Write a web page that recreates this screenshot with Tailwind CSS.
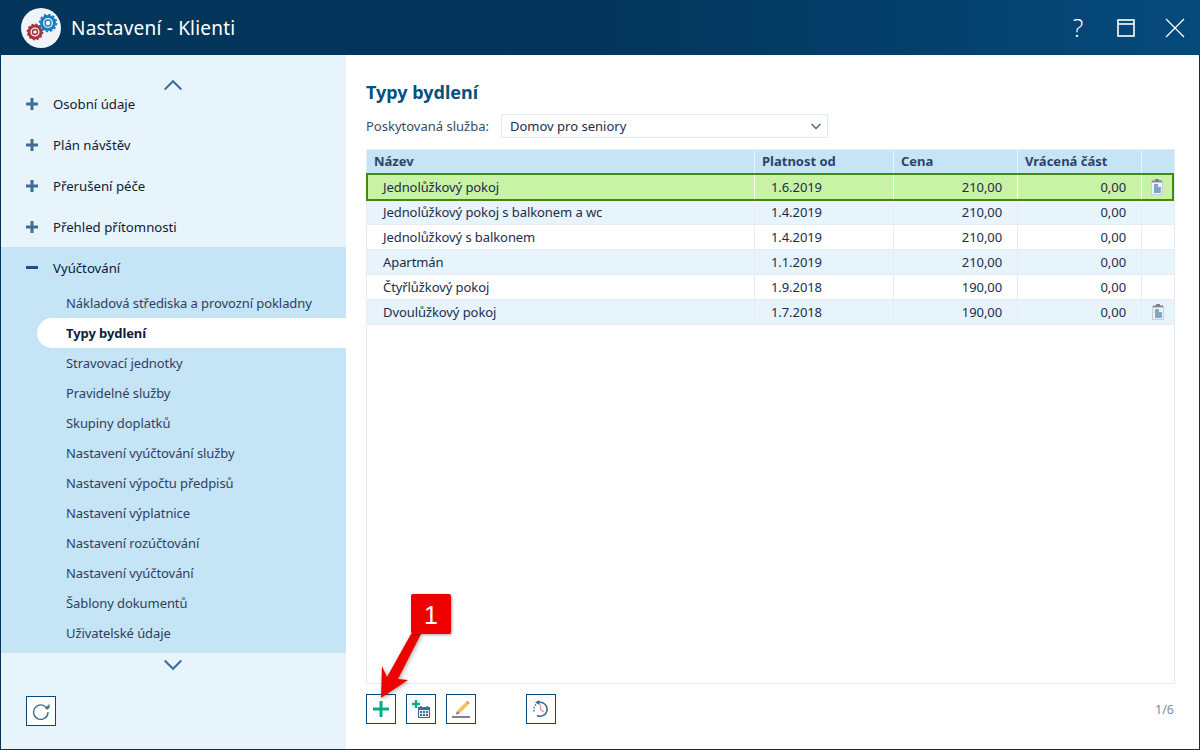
<!DOCTYPE html>
<html lang="en">
<head>
  <meta charset="UTF-8"/>
  <title>Nastavení - Klienti</title>
  <script src="https://cdn.jsdelivr.net/npm/@tailwindcss/browser@4"></script>
</head>
<body class="w-[1200px] h-[750px] overflow-hidden bg-white font-['Noto_Sans',sans-serif] text-[13px] text-[#1c2c4c]">
  <div class="relative flex flex-col h-[750px] border-x border-b border-[#03355a]">

    <!-- Title bar -->
    <header class="-mx-px h-[55px] shrink-0 flex items-center pl-[21px] pr-[15px] bg-gradient-to-r from-[#03355a] via-[#03355a] to-[#054a7c] text-white">
      <div class="w-10 h-10 rounded-full bg-[#eef4f8] flex items-center justify-center">
        <svg width="34" height="28" viewBox="0 0 34 28">
          <g fill="none" stroke="#a8323e">
            <circle cx="11" cy="18" r="6" stroke-width="3"/>
            <circle cx="11" cy="18" r="2.5" stroke-width="1.4"/>
            <circle cx="11" cy="18" r="7.6" stroke-width="1.6" stroke-dasharray="2 2"/>
          </g>
          <g fill="none" stroke="#1b7dc0">
            <circle cx="24" cy="9" r="6.5" stroke-width="3"/>
            <circle cx="24" cy="9" r="3" stroke-width="1.4"/>
            <circle cx="24" cy="9" r="8.4" stroke-width="1.8" stroke-dasharray="2.2 2.2"/>
          </g>
        </svg>
      </div>
      <h1 class="ml-[10px] pt-[1px] text-[19px] tracking-[0.2px]">Nastavení - Klienti</h1>
      <div class="ml-auto flex items-center">
        <span class="w-[16px] text-center text-[25px] leading-none font-light font-['Open_Sans',sans-serif]">?</span>
        <svg class="ml-[31px]" width="18" height="18" viewBox="0 0 18 18" fill="none" stroke="white" stroke-width="1.6"><rect x="1" y="1" width="16" height="16"/><path d="M1 5h16"/></svg>
        <svg class="ml-[30px]" width="20" height="20" viewBox="0 0 20 20" fill="none" stroke="white" stroke-width="1.3"><path d="M1 1l18 18M19 1L1 19"/></svg>
      </div>
    </header>

    <div class="flex flex-1 min-h-0">
      <!-- Sidebar -->
      <aside class="w-[345px] shrink-0 bg-[#e8f4fb] flex flex-col">
        <div class="h-[36px] shrink-0 flex items-end justify-center pr-[1px]">
          <svg width="18" height="12" viewBox="0 0 18 12" fill="none" stroke="#3f6c97" stroke-width="2"><path d="M0.700 10.500L9 2.200l8.300 8.300"/></svg>
        </div>
        <nav class="-mt-[8px] shrink-0 flex flex-col text-[13.2px] text-[#0c1a33]">
          <div class="h-[41px] flex items-center pl-[25px] pt-[2px]">
            <svg class="mr-[15px] -mt-[2px]" width="12" height="12" viewBox="0 0 12 12" fill="#3f6c97"><path d="M4.500 0h3v4.500H12v3H7.500V12h-3V7.500H0v-3h4.500z"/></svg>Osobní údaje
          </div>
          <div class="h-[41px] flex items-center pl-[25px] pt-[2px]">
            <svg class="mr-[15px] -mt-[2px]" width="12" height="12" viewBox="0 0 12 12" fill="#3f6c97"><path d="M4.500 0h3v4.500H12v3H7.500V12h-3V7.500H0v-3h4.500z"/></svg>Plán návštěv
          </div>
          <div class="h-[41px] flex items-center pl-[25px] pt-[2px]">
            <svg class="mr-[15px] -mt-[2px]" width="12" height="12" viewBox="0 0 12 12" fill="#3f6c97"><path d="M4.500 0h3v4.500H12v3H7.500V12h-3V7.500H0v-3h4.500z"/></svg>Přerušení péče
          </div>
          <div class="h-[41px] flex items-center pl-[25px] pt-[2px]">
            <svg class="mr-[15px] -mt-[2px]" width="12" height="12" viewBox="0 0 12 12" fill="#3f6c97"><path d="M4.500 0h3v4.500H12v3H7.500V12h-3V7.500H0v-3h4.500z"/></svg>Přehled přítomnosti
          </div>
          <div class="bg-[#c5e4f6] h-[406px] flex flex-col">
            <div class="h-[41px] shrink-0 flex items-center pl-[25px] pt-[2px]">
              <span class="w-3 h-[3px] mr-[15px] -mt-[2px] bg-[#1c4f86]"></span>Vyúčtování
            </div>
            <div class="flex flex-col text-[13px] tracking-[-0.08px] text-[#2e3f5c]">
              <a class="h-[30px] shrink-0 flex items-center pl-[65px] pt-[2px]">Nákladová střediska a provozní pokladny</a>
              <a class="h-[30px] shrink-0 flex items-center pl-[29px] pt-[2px] ml-[36px] -mr-px rounded-l-[15px] bg-white font-bold text-[#0f1c3c]">Typy bydlení</a>
              <a class="h-[30px] shrink-0 flex items-center pl-[65px] pt-[2px]">Stravovací jednotky</a>
              <a class="h-[30px] shrink-0 flex items-center pl-[65px] pt-[2px]">Pravidelné služby</a>
              <a class="h-[30px] shrink-0 flex items-center pl-[65px] pt-[2px]">Skupiny doplatků</a>
              <a class="h-[30px] shrink-0 flex items-center pl-[65px] pt-[2px]">Nastavení vyúčtování služby</a>
              <a class="h-[30px] shrink-0 flex items-center pl-[65px] pt-[2px]">Nastavení výpočtu předpisů</a>
              <a class="h-[30px] shrink-0 flex items-center pl-[65px] pt-[2px]">Nastavení výplatnice</a>
              <a class="h-[30px] shrink-0 flex items-center pl-[65px] pt-[2px]">Nastavení rozúčtování</a>
              <a class="h-[30px] shrink-0 flex items-center pl-[65px] pt-[2px]">Nastavení vyúčtování</a>
              <a class="h-[30px] shrink-0 flex items-center pl-[65px] pt-[2px]">Šablony dokumentů</a>
              <a class="h-[30px] shrink-0 flex items-center pl-[65px] pt-[2px]">Uživatelské údaje</a>
            </div>
          </div>
        </nav>
        <div class="flex-1 flex flex-col">
          <div class="h-[24px] flex items-center justify-center pr-[1px]">
            <svg width="18" height="12" viewBox="0 0 18 12" fill="none" stroke="#3f6c97" stroke-width="2"><path d="M0.700 1.500L9 9.800l8.300-8.300"/></svg>
          </div>
          <div class="pl-[25px] pt-[19px]">
            <button class="w-[30px] h-[30px] bg-white border border-[#054a7c] flex items-center justify-center">
              <svg width="18" height="18" viewBox="0 0 18 18" fill="none"><path d="M15.500 7.500A7.200 7.200 0 1 0 16 10" stroke="#3f6c97" stroke-width="1.400"/><path d="M12.500 6.500h5V2z" fill="#3f6c97"/></svg>
            </button>
          </div>
        </div>
      </aside>

      <!-- Main content -->
      <main class="relative flex-1 min-w-0 flex flex-col pl-[20px] pr-[24px] bg-white">
        <h2 class="mt-[24px] h-[26px] text-[18px] leading-[26px] font-bold text-[#03517f]">Typy bydlení</h2>
        <div class="mt-[9px] flex items-center text-[#3a4a62]">
          <span class="w-[135px] shrink-0 pt-[2px]">Poskytovaná služba:</span>
          <div class="w-[327px] h-[24px] border border-[#e3e9f3] flex items-center pl-[8px] pr-[6px] text-[#1c2c4c]">
            <span class="pt-[2px]">Domov pro seniory</span>
            <svg class="ml-auto" width="10" height="7" viewBox="0 0 10 7" fill="none" stroke="#3f6c97" stroke-width="1.500"><path d="M0.500 1L5 5.500 9.500 1"/></svg>
          </div>
        </div>

        <!-- Grid -->
        <div class="mt-[11px] h-[535px] border border-[#e6ebf5] flex flex-col tracking-[-0.08px]">
          <div class="h-[25px] shrink-0 flex bg-[#c5e4f6] font-bold tracking-normal text-[#2c4467]">
            <div class="w-[387px] pl-[7px] pb-[2px] flex items-center">Název</div>
            <div class="w-[139px] pl-[7px] pb-[2px] flex items-center border-l border-[#e8f4fb]">Platnost od</div>
            <div class="w-[124px] pl-[7px] pb-[2px] flex items-center border-l border-[#e8f4fb]">Cena</div>
            <div class="w-[124px] pl-[7px] pb-[2px] flex items-center border-l border-[#e8f4fb]">Vrácená část</div>
            <div class="flex-1 border-l border-[#e8f4fb]"></div>
          </div>

          <div class="relative h-[28px] shrink-0 flex bg-[#c8f2a6] border-2 border-[#43880f] -mt-[2px] -mb-px -ml-px">
            <div class="w-[386px] pl-[15px] pt-[2px] flex items-center">Jednolůžkový pokoj</div>
            <div class="w-[139px] pl-[16px] pt-[2px] flex items-center border-l border-white">1.6.2019</div>
            <div class="w-[124px] pr-[15px] pt-[2px] flex items-center justify-end border-l border-white">210,00</div>
            <div class="w-[124px] pr-[15px] pt-[2px] flex items-center justify-end border-l border-white">0,00</div>
            <div class="flex-1 border-l border-white flex items-center justify-center">
              <svg width="12" height="16" viewBox="0 0 12 16"><rect x="0" y="2" width="12" height="14" fill="#c9ccd0"/><rect x="1" y="4" width="10" height="11" fill="#eef3f8"/><path d="M3 5h4v3h3v6H3z" fill="#7ea6c6"/><path d="M1 3V1.500h3V0h4v1.500h3V3z" fill="#8a7d92"/></svg>
            </div>
          </div>

          <div class="h-[25px] shrink-0 flex bg-[#e8f4fb] border-b border-[#e6ebf5]">
            <div class="w-[387px] pl-[16px] pt-[2px] flex items-center">Jednolůžkový pokoj s balkonem a wc</div>
            <div class="w-[139px] pl-[16px] pt-[2px] flex items-center border-l border-[#e6ebf5]">1.4.2019</div>
            <div class="w-[124px] pr-[15px] pt-[2px] flex items-center justify-end border-l border-[#e6ebf5]">210,00</div>
            <div class="w-[124px] pr-[15px] pt-[2px] flex items-center justify-end border-l border-[#e6ebf5]">0,00</div>
            <div class="flex-1 border-l border-[#e6ebf5]"></div>
          </div>
          <div class="h-[25px] shrink-0 flex bg-white border-b border-[#e6ebf5]">
            <div class="w-[387px] pl-[16px] pt-[2px] flex items-center">Jednolůžkový s balkonem</div>
            <div class="w-[139px] pl-[16px] pt-[2px] flex items-center border-l border-[#e6ebf5]">1.4.2019</div>
            <div class="w-[124px] pr-[15px] pt-[2px] flex items-center justify-end border-l border-[#e6ebf5]">210,00</div>
            <div class="w-[124px] pr-[15px] pt-[2px] flex items-center justify-end border-l border-[#e6ebf5]">0,00</div>
            <div class="flex-1 border-l border-[#e6ebf5]"></div>
          </div>
          <div class="h-[25px] shrink-0 flex bg-[#e8f4fb] border-b border-[#e6ebf5]">
            <div class="w-[387px] pl-[16px] pt-[2px] flex items-center">Apartmán</div>
            <div class="w-[139px] pl-[16px] pt-[2px] flex items-center border-l border-[#e6ebf5]">1.1.2019</div>
            <div class="w-[124px] pr-[15px] pt-[2px] flex items-center justify-end border-l border-[#e6ebf5]">210,00</div>
            <div class="w-[124px] pr-[15px] pt-[2px] flex items-center justify-end border-l border-[#e6ebf5]">0,00</div>
            <div class="flex-1 border-l border-[#e6ebf5]"></div>
          </div>
          <div class="h-[25px] shrink-0 flex bg-white border-b border-[#e6ebf5]">
            <div class="w-[387px] pl-[16px] pt-[2px] flex items-center">Čtyřlůžkový pokoj</div>
            <div class="w-[139px] pl-[16px] pt-[2px] flex items-center border-l border-[#e6ebf5]">1.9.2018</div>
            <div class="w-[124px] pr-[15px] pt-[2px] flex items-center justify-end border-l border-[#e6ebf5]">190,00</div>
            <div class="w-[124px] pr-[15px] pt-[2px] flex items-center justify-end border-l border-[#e6ebf5]">0,00</div>
            <div class="flex-1 border-l border-[#e6ebf5]"></div>
          </div>
          <div class="h-[25px] shrink-0 flex bg-[#e8f4fb] border-b border-[#e6ebf5]">
            <div class="w-[387px] pl-[16px] pt-[2px] flex items-center">Dvoulůžkový pokoj</div>
            <div class="w-[139px] pl-[16px] pt-[2px] flex items-center border-l border-[#e6ebf5]">1.7.2018</div>
            <div class="w-[124px] pr-[15px] pt-[2px] flex items-center justify-end border-l border-[#e6ebf5]">190,00</div>
            <div class="w-[124px] pr-[15px] pt-[2px] flex items-center justify-end border-l border-[#e6ebf5]">0,00</div>
            <div class="flex-1 border-l border-[#e6ebf5] flex items-center justify-center">
              <svg width="12" height="16" viewBox="0 0 12 16"><rect x="0" y="2" width="12" height="14" fill="#c9ccd0"/><rect x="1" y="4" width="10" height="11" fill="#eef3f8"/><path d="M3 5h4v3h3v6H3z" fill="#7ea6c6"/><path d="M1 3V1.500h3V0h4v1.500h3V3z" fill="#8a7d92"/></svg>
            </div>
          </div>
        </div>

        <!-- Toolbar -->
        <div class="mt-[10px] flex items-center">
          <button class="w-[30px] h-[30px] border border-[#054a7c] flex items-center justify-center">
            <svg width="16" height="16" viewBox="0 0 16 16" fill="#0ea98a"><path d="M6.500 0h3v6.500H16v3H9.500V16h-3V9.500H0v-3h6.500z"/></svg>
          </button>
          <button class="ml-[10px] w-[30px] h-[30px] border border-[#054a7c] flex items-center justify-center">
            <svg width="24" height="24" viewBox="0 0 24 24">
              <path d="M5.800 3h2.400v2.800H11v2.400H8.200V11H5.800V8.200H3V5.800h2.800z" fill="#0ea98a"/>
              <rect x="9" y="10" width="12" height="11" fill="#3f6c97"/>
              <rect x="11" y="9" width="1.500" height="2" fill="#3f6c97"/><rect x="17.500" y="9" width="1.500" height="2" fill="#3f6c97"/>
              <rect x="10" y="13" width="10" height="7" fill="#e3eef6"/>
              <path d="M11 14h2v2h-2zM14 14h2v2h-2zM17 14h2v2h-2zM11 17h2v2h-2zM14 17h2v2h-2zM17 17h2v2h-2z" fill="#3f6c97"/>
            </svg>
          </button>
          <button class="ml-[10px] w-[30px] h-[30px] border border-[#054a7c] flex items-center justify-center">
            <svg width="20" height="20" viewBox="0 0 20 20">
              <path d="M6 12L15 3l2.500 2.500-9 9z" fill="#f6bf5a"/>
              <path d="M15 3l1.300-1.300 2.500 2.500-1.300 1.300z" fill="#ea7f7f"/>
              <path d="M6 12l2.500 2.500-3.500 1z" fill="#6b7280"/>
              <rect x="1" y="17" width="18" height="2" fill="#8a7d92"/>
            </svg>
          </button>
          <button class="ml-[50px] w-[30px] h-[30px] border border-[#054a7c] flex items-center justify-center">
            <svg width="18" height="18" viewBox="0 0 18 18" fill="none">
              <path d="M7 2.300A7 7 0 1 1 5 15.500" stroke="#3f6c97" stroke-width="1.500"/>
              <path d="M4 4.500A7 7 0 0 0 2.500 12.500" stroke="#3f6c97" stroke-width="1.500" stroke-dasharray="1.500 1.500"/>
              <path d="M7.500 0v5L3 2.500z" fill="#3f6c97"/>
              <path d="M8.500 4.500v5l3.500 2.500" stroke="#ee8f96" stroke-width="1.300"/>
            </svg>
          </button>
          <span class="ml-auto pr-px pt-[2px] text-[12.5px] text-[#7b8ba1]">1/6</span>
        </div>

        <!-- Callout -->
        <svg class="absolute left-[30px] top-[575px] drop-shadow-[1px_1px_2px_rgba(0,0,0,0.35)]" width="50" height="70" viewBox="0 0 50 70">
          <path d="M5 68L6 36l5 11L35 4h10L22 49l10 1z" fill="#ef0000"/>
        </svg>
        <div class="absolute left-[65px] top-[539px] w-10 h-10 pt-[3px] rounded-[2px] bg-[#ef0000] shadow-[1px_1px_3px_rgba(0,0,0,0.35)] flex items-center justify-center text-white text-[25px] font-['Liberation_Sans',sans-serif]">1</div>
      </main>
    </div>
  </div>
</body>
</html>
